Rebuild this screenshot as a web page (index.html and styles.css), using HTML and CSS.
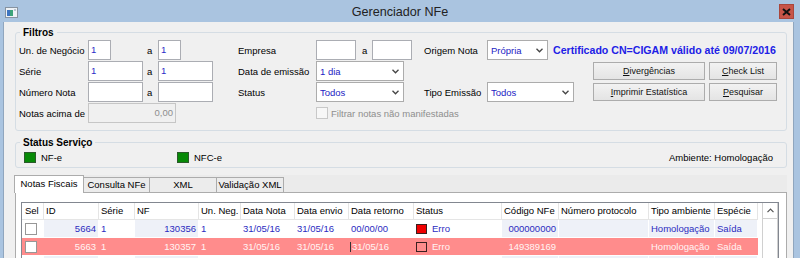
FILE: index.html
```html
<!DOCTYPE html>
<html lang="pt-BR">
<head>
    <meta charset="UTF-8">
    <title>Gerenciador NFe</title>
    <link rel="stylesheet" href="styles.css">
</head>
<body>
<div class="window">
    <div class="titlebar">
        <div class="tb-left">
            <svg class="app-icon" width="13" height="11" viewBox="0 0 13 11">
                <rect x="0.5" y="0.5" width="12" height="10" fill="#eef2f6" stroke="#8793a0"/>
                <rect x="2" y="3" width="6" height="6" fill="#3da37a"/>
                <rect x="2" y="3" width="3" height="6" fill="#3d74c0"/>
                <rect x="9" y="2" width="2" height="2" fill="#b9c5d2"/>
            </svg>
        </div>
        <div class="title">Gerenciador NFe</div>
        <div class="tb-right">
            <div class="close-btn">
                <svg width="9" height="8" viewBox="0 0 9 8"><path d="M1 1 L8 7 M8 1 L1 7" stroke="#111" stroke-width="2"/></svg>
            </div>
        </div>
    </div>

    <div class="client">
        <fieldset class="group filtros">
            <legend>Filtros</legend>
            <div class="filter-grid">
                <!-- linha 1 -->
                <label>Un. de Negócio</label>
                <div class="field w23">1</div>
                <span class="a">a</span>
                <div class="field w23">1</div>
                <label>Empresa</label>
                <div class="field w40"></div>
                <span class="a">a</span>
                <div class="field w40"></div>
                <label>Origem Nota</label>
                <div class="origem">
                    <div class="combo w61"><span>Própria</span><svg width="7" height="5" viewBox="0 0 7 5"><path d="M0.5 0.8 L3.5 3.8 L6.5 0.8" fill="none" stroke="#444" stroke-width="1.3"/></svg></div>
                    <span class="cert">Certificado CN=CIGAM válido até 09/07/2016</span>
                </div>

                <!-- linha 2 -->
                <label>Série</label>
                <div class="field w55">1</div>
                <span class="a">a</span>
                <div class="field w55">1</div>
                <label>Data de emissão</label>
                <div class="combo w88 span3"><span>1 dia</span><svg width="7" height="5" viewBox="0 0 7 5"><path d="M0.5 0.8 L3.5 3.8 L6.5 0.8" fill="none" stroke="#444" stroke-width="1.3"/></svg></div>
                <button class="btn btn-wide col11"><u>D</u>ivergências</button>
                <button class="btn btn-small col12"><u>C</u>heck List</button>

                <!-- linha 3 -->
                <label>Número Nota</label>
                <div class="field w55"></div>
                <span class="a">a</span>
                <div class="field w55"></div>
                <label>Status</label>
                <div class="combo w88 span3"><span>Todos</span><svg width="7" height="5" viewBox="0 0 7 5"><path d="M0.5 0.8 L3.5 3.8 L6.5 0.8" fill="none" stroke="#444" stroke-width="1.3"/></svg></div>
                <label>Tipo Emissão</label>
                <div class="combo w87"><span>Todos</span><svg width="7" height="5" viewBox="0 0 7 5"><path d="M0.5 0.8 L3.5 3.8 L6.5 0.8" fill="none" stroke="#444" stroke-width="1.3"/></svg></div>
                <button class="btn btn-wide col11"><u>I</u>mprimir Estatística</button>
                <button class="btn btn-small col12"><u>P</u>esquisar</button>

                <!-- linha 4 -->
                <label>Notas acima de</label>
                <div class="field w88 span3 disabled">0,00</div>
                <div class="check-line">
                    <span class="chk disabled"></span>
                    <span>Filtrar notas não manifestadas</span>
                </div>
            </div>
        </fieldset>

        <fieldset class="group servico">
            <legend>Status Serviço</legend>
            <div class="svc-row">
                <div class="svc-item"><span class="led"></span>NF-e</div>
                <div class="svc-item"><span class="led"></span>NFC-e</div>
                <div class="ambiente">Ambiente: Homologação</div>
            </div>
        </fieldset>

        <div class="tabstrip">
            <div class="tab active">Notas Fiscais</div>
            <div class="tab t66">Consulta NFe</div>
            <div class="tab t67">XML</div>
            <div class="tab t67">Validação XML</div>
        </div>
        <div class="tab-panel">
            <div class="grid">
                <div class="grid-body">
                    <div class="grow head">
                        <div>Sel</div><div>ID</div><div>Série</div><div>NF</div><div>Un. Neg.</div>
                        <div>Data Nota</div><div>Data envio</div><div>Data retorno</div><div>Status</div>
                        <div>Código NFe</div><div>Número protocolo</div><div>Tipo ambiente</div><div>Espécie</div>
                    </div>
                    <div class="grow data">
                        <div><span class="chk"></span></div>
                        <div class="pale num">5664</div>
                        <div>1</div>
                        <div class="pale num">130356</div>
                        <div>1</div>
                        <div>31/05/16</div>
                        <div>31/05/16</div>
                        <div>00/00/00</div>
                        <div class="st"><span class="sq red"></span>Erro</div>
                        <div class="pale num">000000000</div>
                        <div class="pale"></div>
                        <div class="pale">Homologação</div>
                        <div class="pale">Saída</div>
                    </div>
                    <div class="grow data err">
                        <div><span class="chk"></span></div>
                        <div class="num">5663</div>
                        <div>1</div>
                        <div class="num">130357</div>
                        <div>1</div>
                        <div>31/05/16</div>
                        <div>31/05/16</div>
                        <div class="edit"><span class="caret"></span>31/05/16</div>
                        <div class="st"><span class="sq"></span>Erro</div>
                        <div class="num">149389169</div>
                        <div></div>
                        <div>Homologação</div>
                        <div>Saída</div>
                    </div>
                    <!-- proxima linha, apenas a borda aparece -->
                    <div class="grow data">
                        <div><span class="chk"></span></div>
                        <div class="pale"></div>
                        <div></div>
                        <div class="pale"></div>
                        <div></div>
                        <div></div>
                        <div></div>
                        <div></div>
                        <div></div>
                        <div class="pale"></div>
                        <div class="pale"></div>
                        <div class="pale"></div>
                        <div class="pale"></div>
                    </div>
                </div>
                <div class="vscroll">
                    <div class="up-btn">
                        <svg width="7" height="5" viewBox="0 0 7 5"><path d="M0.5 4.2 L3.5 1.2 L6.5 4.2" fill="none" stroke="#555" stroke-width="1.2"/></svg>
                    </div>
                </div>
            </div>
        </div>
    </div>
</div>
</body>
</html>
```

FILE: styles.css
```css
* {
    box-sizing: border-box;
}
html, body {
    margin: 0;
    padding: 0;
}
body {
    font-family: "Liberation Sans", Arial, sans-serif;
    font-size: 9.5px;
    color: #000;
    background: #aac4e0;
    width: 800px;
    height: 258px;
    overflow: hidden;
}

/* barra de titulo */
.titlebar {
    height: 22px;
    display: grid;
    grid-template-columns: 1fr auto 1fr;
    align-items: center;
}
.tb-left {
    padding-left: 5px;
    padding-top: 2px;
}
.app-icon {
    display: block;
}
.title {
    font-size: 12.6px;
    color: #222;
    padding-top: 2px;
}
.tb-right {
    justify-self: end;
    padding-right: 6px;
    padding-top: 1px;
}
.close-btn {
    width: 15px;
    height: 15px;
    background: #c75448;
    border: 1px solid #a9463c;
    display: flex;
    align-items: center;
    justify-content: center;
}

/* area cliente */
.client {
    margin: 0 6px 0 3px;
    border-left: 1px solid #90a6be;
    border-right: 1px solid #90a6be;
    background: #f0f0f0;
    padding: 4px 6px 0 11px;
    height: 236px;
}
.group {
    margin: 0;
    border: 1px solid #d5dde4;
    border-radius: 3px;
    padding: 1px 3px 7px 3px;
    min-width: 0;
}
.group legend {
    font-weight: bold;
    font-size: 10px;
    line-height: 13px;
    padding: 0 3px;
    margin-left: 1px;
}

.filter-grid {
    display: grid;
    grid-template-columns: 69px 59px 11px 80px 78px 46px 10px 52px 63px 106px 116px 68px;
    grid-auto-rows: 20px;
    row-gap: 1px;
    align-items: center;
}
.field {
    height: 20px;
    background: #fff;
    border: 1px solid #abadb3;
    color: #2c2cc8;
    padding: 0 2px;
    line-height: 18px;
}
.field.disabled {
    background: #f0f0f0;
    border-color: #c6c6c6;
    color: #8e8e8e;
    text-align: right;
}
.w23 { width: 23px; }
.w40 { width: 40px; }
.w55 { width: 55px; }
.w61 { width: 61px; }
.w87 { width: 87px; }
.w88 { width: 88px; }
.span3 { grid-column: span 3; }
.col11 { grid-column: 11; }
.col12 { grid-column: 12; }

.combo {
    height: 20px;
    background: #fff;
    border: 1px solid #acacac;
    color: #2323c4;
    display: flex;
    align-items: center;
    justify-content: space-between;
    padding: 0 4px 0 3px;
}
.combo svg {
    display: block;
}
.origem {
    grid-column: span 3;
    display: flex;
    align-items: center;
    gap: 5px;
}
.cert {
    font-weight: bold;
    font-size: 10.6px;
    color: #2020e6;
    white-space: nowrap;
}
.btn {
    height: 18px;
    border: 1px solid #acacac;
    background: linear-gradient(#f2f2f2, #e4e4e4);
    font-family: inherit;
    font-size: 9px;
    color: #111;
    padding: 0;
}
.btn-wide { width: 112px; }
.btn-small { width: 68px; }

.check-line {
    grid-column: 6 / span 7;
    display: flex;
    align-items: center;
    gap: 3px;
    color: #8e8e8e;
}
.chk {
    display: inline-block;
    width: 12px;
    height: 12px;
    background: #fff;
    border: 1px solid #979797;
}
.chk.disabled {
    border-color: #c8c8c8;
    background: #f7f7f7;
}

/* status servico */
.servico {
    margin-top: 5px;
    padding: 0 3px 2px 3px;
}
.svc-row {
    height: 16px;
    display: flex;
    align-items: center;
    padding: 0 10px 0 5px;
}
.svc-item {
    display: flex;
    align-items: center;
    gap: 5px;
    width: 153px;
}
.led {
    width: 12px;
    height: 11px;
    background: #078a07;
    border: 1px solid #2b5a2b;
}
.ambiente {
    margin-left: auto;
}

/* abas */
.tabstrip {
    margin-top: 7px;
    height: 17px;
    display: flex;
    align-items: flex-start;
    background: #ebebeb;
}
.tab {
    height: 15px;
    margin-top: 2px;
    border: 1px solid #acacac;
    border-bottom: none;
    border-left: none;
    background: #ececec;
    text-align: center;
    line-height: 14px;
}
.tab.active {
    width: 70px;
    height: 18px;
    margin-top: 0;
    margin-left: -1px;
    border-left: 1px solid #acacac;
    background: #fff;
    line-height: 16px;
    position: relative;
    z-index: 1;
}
.t66 { width: 66px; }
.t67 { width: 67px; }

.tab-panel {
    border: 1px solid #acacac;
    background: #fff;
    padding: 9px 7px 0 5px;
    height: 90px;
}
.grid {
    border: 1px solid #828790;
    display: flex;
    height: 80px;
}
.grid-body {
    width: 740px;
}
.grow {
    display: grid;
    grid-template-columns: 22px 55px 36px 64px 42px 54px 54px 65px 88px 57px 90px 66px 43px;
    width: 736px;
}
.grow > div {
    white-space: nowrap;
    overflow: hidden;
}
.head {
    height: 17px;
    border-bottom: 1px solid #e5e5e5;
}
.head > div {
    border-right: 1px solid #e5e5e5;
    padding-left: 2px;
    line-height: 16px;
}
.head > div:first-child {
    padding-left: 3px;
}
.data {
    height: 18px;
    border-bottom: 1px solid #fff;
    color: #2b2bbf;
}
.data > div {
    border-right: 1px solid #fff;
    padding: 0 2px;
    line-height: 17px;
    display: flex;
    align-items: center;
}
.data > div:first-child {
    padding-left: 3px;
}
.data .num {
    justify-content: flex-end;
}
.data .pale {
    background: #eef1f8;
}
.data .st {
    gap: 5px;
}
.sq {
    width: 11px;
    height: 10px;
    border: 1px solid #3a2020;
}
.sq.red {
    background: #f00000;
}
.data.err {
    background: #ff8c8c;
    color: #fff4f4;
}
.data.err > div {
    border-right-color: #ff8c8c;
}
.caret {
    width: 1px;
    height: 10px;
    background: #333;
    margin-right: 1px;
}
.edit {
    padding-left: 1px !important;
}

.vscroll {
    margin-left: auto;
    width: 16px;
    border-left: 1px solid #d0d0d0;
    border-right: 1px solid #d0d0d0;
    background: #fff;
}
.up-btn {
    height: 16px;
    border-bottom: 1px solid #d0d0d0;
    display: flex;
    align-items: center;
    justify-content: center;
}
```
